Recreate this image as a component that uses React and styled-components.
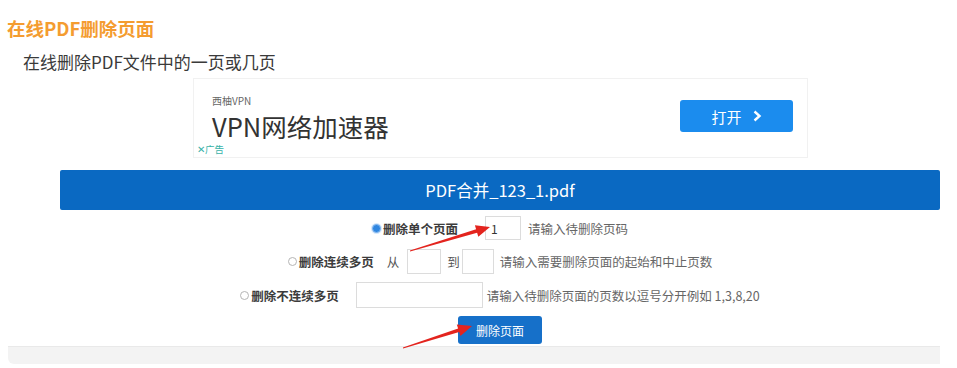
import React from "react";
import styled, { createGlobalStyle } from "styled-components";

const GlobalStyle = createGlobalStyle`
  html, body {
    margin: 0;
    padding: 0;
    background: #ffffff;
  }
  * {
    box-sizing: border-box;
  }
`;

const Page = styled.div`
  position: relative;
  width: 957px;
  height: 368px;
  overflow: hidden;
  background: #fff;
  font-family: "Noto Sans CJK SC", "Noto Sans", sans-serif;
  color: #333;
`;

const Title = styled.h1`
  margin: 0;
  padding: 18px 0 0 7px;
  font-size: 18.5px;
  line-height: 20px;
  font-weight: 700;
  color: #f49c30;
`;

const Subtitle = styled.p`
  margin: 14px 0 0 23px;
  font-size: 17px;
  line-height: 20px;
  color: #3a3a3a;
`;

const Ad = styled.div`
  position: relative;
  margin: 6px 0 0 193px;
  width: 615px;
  height: 80px;
  border: 1px solid #f1f1f1;
  display: flex;
  justify-content: space-between;
  align-items: flex-start;
  padding: 14px 14px 0 18px;
`;

const AdText = styled.div`
  display: flex;
  flex-direction: column;
`;

const AdBrand = styled.span`
  font-size: 10px;
  line-height: 15px;
  color: #666;
`;

const AdHeadline = styled.span`
  font-size: 25.5px;
  line-height: 36px;
  color: #333;
`;

const AdMark = styled.span`
  position: absolute;
  left: 3px;
  bottom: 2px;
  font-size: 9.5px;
  line-height: 11px;
  color: #37b2a8;
`;

const OpenButton = styled.button`
  margin-top: 7px;
  width: 113px;
  height: 32px;
  border: none;
  border-radius: 3px;
  background: #1b8cee;
  color: #fff;
  font-family: inherit;
  font-size: 15px;
  display: flex;
  align-items: center;
  justify-content: center;
  gap: 10px;
`;

const FileBar = styled.div`
  margin: 12px 0 0 60px;
  width: 880px;
  height: 40px;
  border-radius: 2px;
  background: #0a69c2;
  color: #fff;
  font-size: 16.5px;
  display: flex;
  align-items: center;
  justify-content: center;
`;

const Form = styled.div`
  margin: 1px 0 0 60px;
  width: 880px;
  display: flex;
  flex-direction: column;
  align-items: center;
`;

const Row = styled.div`
  height: ${(p) => p.$h || 33}px;
  display: flex;
  align-items: center;
  justify-content: center;
  font-size: 12.5px;
`;

const Radio = styled.span`
  width: 9px;
  height: 9px;
  border-radius: 50%;
  border: 1px solid ${(p) => (p.$checked ? "#7fb4ee" : "#b5b5b5")};
  background: ${(p) => (p.$checked ? "#2f86e0" : "#fff")};
  box-shadow: ${(p) => (p.$checked ? "0 0 0 1px #d6e8fb" : "none")};
  margin-right: 2px;
`;

const Label = styled.span`
  font-weight: 700;
  color: #3c3c3c;
  margin-right: ${(p) => p.$mr || 0}px;
`;

const Word = styled.span`
  color: #555;
  margin: 0 ${(p) => p.$mr || 0}px 0 ${(p) => p.$ml || 0}px;
`;

const Field = styled.input`
  width: ${(p) => p.$w}px;
  height: ${(p) => p.$hh || 25}px;
  border: 1px solid #dcdcdc;
  padding: 0 5px;
  font-family: inherit;
  font-size: 12px;
  color: #333;
  margin-right: ${(p) => p.$mr || 0}px;
  outline: none;
`;

const Hint = styled.span`
  color: #666;
`;

const SubmitButton = styled.button`
  margin-top: 4px;
  width: 84px;
  height: 28px;
  border: none;
  border-radius: 3px;
  background: #1670c9;
  color: #fff;
  font-family: inherit;
  font-size: 12px;
`;

const Footer = styled.div`
  margin: 2px 0 0 8px;
  width: 932px;
  height: 18px;
  background: #f3f3f3;
  border-top: 1px solid #e9e9e9;
  border-radius: 0 0 0 6px;
`;

const Overlay = styled.svg`
  position: absolute;
  left: 0;
  top: 0;
  pointer-events: none;
`;

const Chevron = () => (
  <svg width="10" height="12" viewBox="0 0 10 12">
    <path d="M2.5 1.5 L7.5 6 L2.5 10.5" fill="none" stroke="#fff" strokeWidth="2.4" />
  </svg>
);

const Arrow = ({ from, to }) => {
  const dx = to[0] - from[0];
  const dy = to[1] - from[1];
  const len = Math.hypot(dx, dy);
  const ux = dx / len;
  const uy = dy / len;
  const nx = -uy;
  const ny = ux;
  const bx = to[0] - ux * 14;
  const by = to[1] - uy * 14;
  const pt = (x, y) => `${x.toFixed(1)},${y.toFixed(1)}`;
  const points = [
    pt(from[0] + nx * 0.4, from[1] + ny * 0.4),
    pt(bx + nx * 1.8, by + ny * 1.8),
    pt(bx + nx * 6, by + ny * 6),
    pt(to[0], to[1]),
    pt(bx - nx * 6, by - ny * 6),
    pt(bx - nx * 1.8, by - ny * 1.8),
    pt(from[0] - nx * 0.4, from[1] - ny * 0.4),
  ].join(" ");
  return <polygon points={points} fill="#e3241e" />;
};

export default function App() {
  return (
    <Page>
      <GlobalStyle />
      <Title>在线PDF删除页面</Title>
      <Subtitle>在线删除PDF文件中的一页或几页</Subtitle>

      <Ad>
        <AdText>
          <AdBrand>西柚VPN</AdBrand>
          <AdHeadline>VPN网络加速器</AdHeadline>
        </AdText>
        <OpenButton>
          打开 <Chevron />
        </OpenButton>
        <AdMark>✕广告</AdMark>
      </Ad>

      <FileBar>PDF合并_123_1.pdf</FileBar>

      <Form>
        <Row $h={34}>
          <Radio $checked />
          <Label $mr={27}>删除单个页面</Label>
          <Field $w={36} $hh={24} $mr={7} defaultValue="1" />
          <Hint>请输入待删除页码</Hint>
        </Row>
        <Row $h={33}>
          <Radio />
          <Label $mr={13}>删除连续多页</Label>
          <Word $mr={8}>从</Word>
          <Field $w={34} $mr={6} />
          <Word $mr={2}>到</Word>
          <Field $w={32} $mr={6} />
          <Hint>请输入需要删除页面的起始和中止页数</Hint>
        </Row>
        <Row $h={34}>
          <Radio />
          <Label $mr={17}>删除不连续多页</Label>
          <Field $w={127} $hh={26} $mr={4} />
          <Hint>请输入待删除页面的页数以逗号分开例如 1,3,8,20</Hint>
        </Row>
        <SubmitButton>删除页面</SubmitButton>
      </Form>

      <Footer />

      <Overlay width="957" height="368" viewBox="0 0 957 368">
        <Arrow from={[410, 251]} to={[490, 227]} />
        <Arrow from={[403, 348]} to={[472, 326]} />
      </Overlay>
    </Page>
  );
}
